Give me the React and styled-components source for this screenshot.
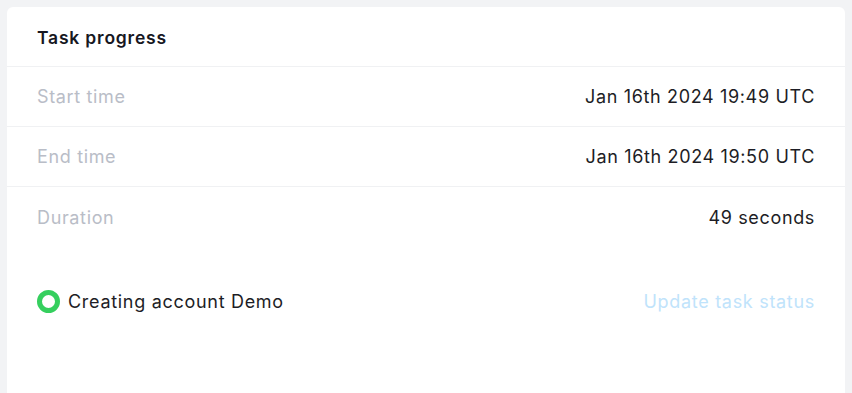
import React from "react"
import styled, { createGlobalStyle } from "styled-components"

const GlobalStyle = createGlobalStyle`
  html, body {
    margin: 0;
    padding: 0;
    background: #f2f3f5;
    font-family: "Inter", "Open Sans", sans-serif;
    -webkit-font-smoothing: antialiased;
  }
`

const Page = styled.div`
  padding: 7px 7px 0 7px;
  height: 393px;
  box-sizing: border-box;
  overflow: hidden;
`

const Card = styled.section`
  background: #ffffff;
  border-radius: 6px 6px 0 0;
  min-height: 420px;
`

const Header = styled.header`
  height: 60px;
  display: flex;
  align-items: center;
  padding: 2px 30px 0 30px;
  box-sizing: border-box;
  border-bottom: 1px solid #f0f1f3;
  font-size: 17.5px;
  font-weight: 600;
  letter-spacing: 0.8px;
  color: #17171f;
`

const Row = styled.div`
  height: 60px;
  box-sizing: border-box;
  display: flex;
  align-items: center;
  justify-content: space-between;
  padding: 0 30px;
  border-bottom: ${(p) => (p.$last ? "none" : "1px solid #f0f1f3")};
  font-size: 18px;
  letter-spacing: 0.65px;
`

const Label = styled.span`
  color: #b9bdc7;
`

const Value = styled.span`
  color: #1d1d25;
`

const StatusRow = styled.div`
  display: flex;
  align-items: center;
  justify-content: space-between;
  padding: 43px 30px 0 30px;
  font-size: 18px;
  letter-spacing: 0.7px;
`

const Status = styled.div`
  display: flex;
  align-items: center;
  gap: 8px;
  color: #1d1d25;
`

const Dot = styled.span`
  width: 13px;
  height: 13px;
  border-radius: 50%;
  border: 5px solid #35cf5e;
  background: #fff;
`

const LinkButton = styled.button`
  background: none;
  border: none;
  padding: 0;
  font: inherit;
  letter-spacing: inherit;
  color: #c0e3fb;
  cursor: pointer;
`

const rows = [
  { label: "Start time", value: "Jan 16th 2024 19:49 UTC" },
  { label: "End time", value: "Jan 16th 2024 19:50 UTC" },
  { label: "Duration", value: "49 seconds" },
]

export default function App() {
  return (
    <Page>
      <GlobalStyle />
      <Card>
        <Header>Task progress</Header>
        {rows.map((r, i) => (
          <Row key={r.label} $last={i === rows.length - 1}>
            <Label>{r.label}</Label>
            <Value>{r.value}</Value>
          </Row>
        ))}
        <StatusRow>
          <Status>
            <Dot />
            Creating account Demo
          </Status>
          <LinkButton>Update task status</LinkButton>
        </StatusRow>
      </Card>
    </Page>
  )
}
